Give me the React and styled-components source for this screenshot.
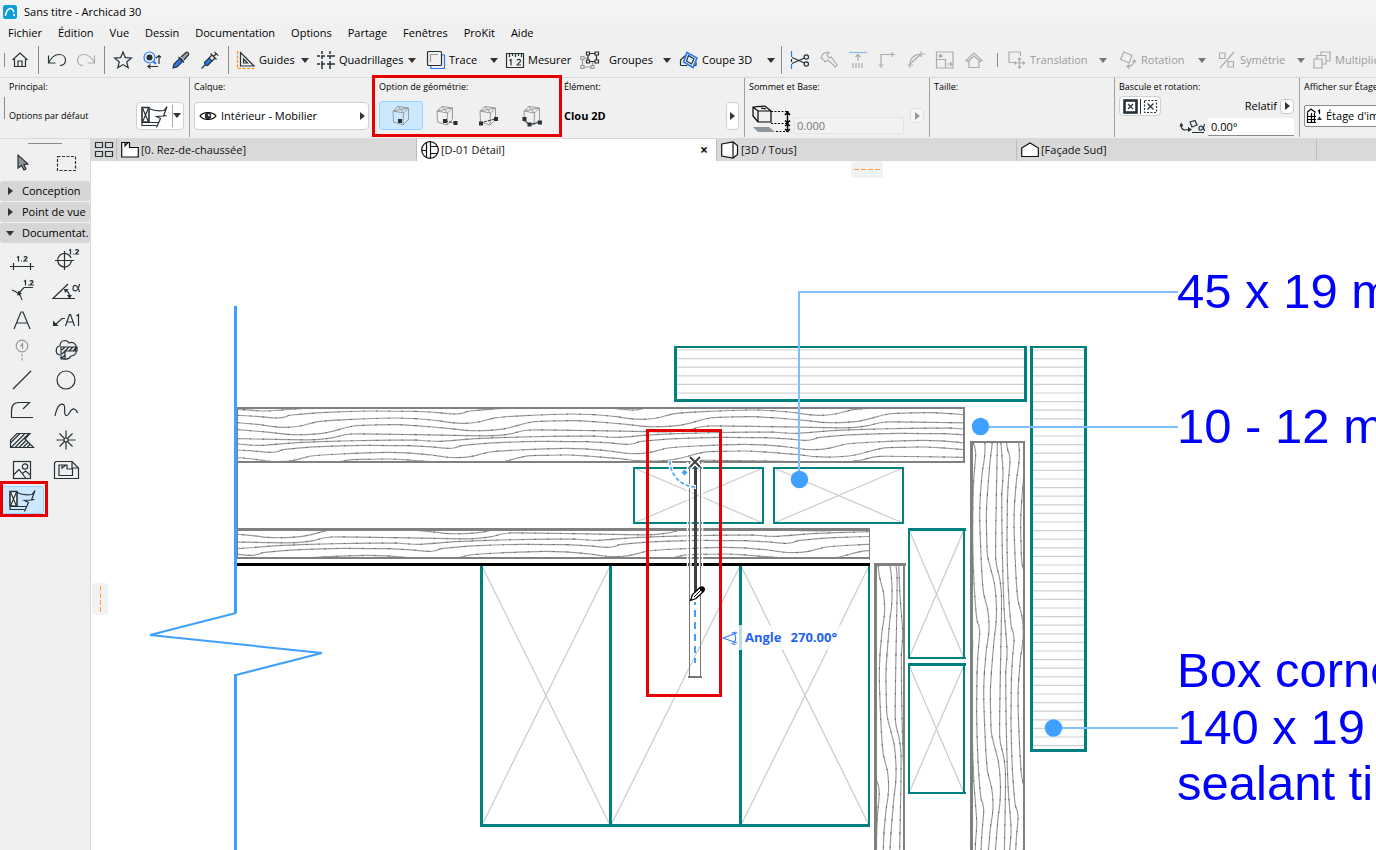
import React from 'react'
import styled, { createGlobalStyle } from 'styled-components'

const GlobalStyle = createGlobalStyle`
    * {
        box-sizing: border-box;
    }
    body {
        margin: 0;
        overflow: hidden;
        background: #f0f0f0;
        color: #000;
        font-family: "Open Sans", "Noto Sans", sans-serif;
        font-size: 11px;
        line-height: 16px;
    }
    button, input {
        font: inherit;
        color: inherit;
        border: none;
        background: none;
        padding: 0;
        margin: 0;
    }
    svg {
        display: block;
        flex: none;
    }
`

/* ---------- icons ---------- */

const icons = {
    logo: <>
        <rect x="0" y="0" width="18" height="18" rx="3" fill="#0a9fd4" stroke="none" />
        <path d="M3 14 C4 8 7 4 10 4.500 C12.500 5 13.500 7 14 9.500" stroke="#fff" strokeWidth="2" />
        <path d="M13 13h2.500" stroke="#fff" strokeWidth="2.500" />
    </>,
    home: <path d="M1.500 9 L9 2 L16.500 9 M3.500 8 V15.500 H14.500 V8 M7 15.500 V10 H11 V15.500" />,
    undo: <path d="M.5 4.500 V12 H7.500 M.5 12 C3 7 7 3.500 11 3.500 C15 3.500 17.500 6 17.500 9 C17.500 12.500 15 14.500 12 14.500" />,
    redo: <path d="M17.500 4.500 V12 H10.500 M17.500 12 C15 7 11 3.500 7 3.500 C3 3.500 .5 6 .5 9 C.5 12.500 3 14.500 6 14.500" />,
    star: <path d="M9 1 L11.300 6.600 L17.300 7 L12.700 11 L14.200 16.800 L9 13.600 L3.800 16.800 L5.300 11 L.7 7 L6.700 6.600 Z" />,
    find: <>
        <circle cx="6.500" cy="6.500" r="5.500" stroke="#2a78f0" />
        <circle cx="6.500" cy="6.500" r="3" fill="#263238" stroke="none" />
        <path d="M10.500 10.500 L13 13" stroke="#2a78f0" strokeWidth="2" />
        <path d="M16 13 V5 M13 7 L16 4.500 L18 6.500 M5 15.500 H15 M7.500 13.500 L5 15.500 L7.500 17.500" />
    </>,
    pipette: <>
        <path d="M1 17 L2 13 L8 7 L11 10 L5 16 Z" fill="#2a78f0" />
        <path d="M8 7 L11 10 M6.500 6 L12 11.500 M9 6 L14 1.500 C15.500 .5 17.500 2.500 16.500 4 L12 9" fill="#9aa3aa" />
    </>,
    syringe: <>
        <path d="M4 14 L3.500 11.500 L8 7 L11 10 L6.500 14.500 Z" fill="#2a78f0" />
        <path d="M.5 17.500 L4 14 M8 7 L11 4 L14 7 L11 10 M9.500 2.500 L15.500 8.500 M12.500 5.500 L15.500 2.500 M13.500 .8 L17.300 4.600" />
    </>,
    guides: <>
        <path d="M.5 0 V17.500 H18" stroke="#ff8a1c" strokeDasharray="3 1.500" />
        <path d="M3.500 1.500 V15 H17 Z M6.500 8 V12 H10.500 Z" />
    </>,
    grid: <path d="M5 0 V3 M5 5 V8 M5 10 V18 M13 0 V3 M13 5 V8 M13 10 V18 M0 5 H3 M4 5 H8 M10 5 H18 M0 13 H3 M4 13 H8 M10 13 H18" strokeWidth="1.500" />,
    trace: <>
        <path d="M15 4 H17.500 V17.500 H4 V15" stroke="#2a78f0" />
        <rect x=".5" y=".5" width="14" height="14" rx="1" />
        <path d="M3.500 11 V3.500 H11" stroke="#999" />
    </>,
    measure: <>
        <path d="M.5 16.500 V2.500 H17.500 V16.500 Z M3.500 3 V6 M6.500 3 V5 M9.500 3 V6 M12.500 3 V5 M15.500 3 V6" />
        <path d="M5 14.500 V8.500 L3.500 9.500 M11 9.500 C11 8 14.500 8 14.500 10 C14.500 11.500 11 13 11 14 H15" />
    </>,
    groups: <>
        <path d="M3 7 H7 M1.500 8.500 V14.500 M3 16 H10 M11.500 11 V14.500 M0 5.500 h3 v3 h-3z M0 14.500 h3 v3 h-3z M10 14.500 h3 v3 h-3z" stroke="#999" />
        <path d="M8.500 2.500 H14 M7 4 V9 M8.500 10.500 H14 M15.500 4 V9 M5.500 1 h3 v3 h-3z M14 1 h3.500 v3 h-3.500z M5.500 9 h3 v3 h-3z M14 9 h3.500 v3 h-3.500z" />
    </>,
    cut3d: <>
        <path d="M.5 14.500 V9 L6 4 M.5 14.500 H7 M16 11 V14.500 H13" />
        <path d="M7 1.500 L17 7 L13 16.500 L3.500 11 Z" fill="#e6f1ff" stroke="#2a78f0" strokeWidth="1.600" />
        <path d="M8.500 4.500 L14 8 L11.500 13 L6.500 10 Z" />
    </>,
    scissors: <>
        <path d="M.5 0 V6 M.5 13 V18" stroke="#2a78f0" />
        <path d="M1 6.500 L13.500 12 M1 12.500 L13.500 7 M.5 8 V11" />
        <circle cx="15.300" cy="6" r="2.200" /><circle cx="15.300" cy="13" r="2.200" />
    </>,
    axe: <path d="M1 7 C2 3 5 1 9 1.500 L7 4 L9 7 L11 6 L17 14 L15.500 16 L8 9 L5 11 L3.500 8.500 Z" />,
    align: <>
        <path d="M0 1.500 H18" stroke="#8ab8f0" />
        <path d="M9 3.500 V10 M6.500 6 L9 3.500 L11.500 6 M4 12 V17 M7 12 V17 M10 12 V17 M13 12 V17" />
    </>,
    corner: <path d="M3 17 V3.500 H17 M14 1 V6 M.5 14 H5.500" />,
    fillet: <path d="M3 17 V13 C3 7 8 3 15 3 M14 .5 V6 M.5 14 H6 M14 3 H18 M3 13 L13 4" />,
    resize: <path d="M.5 1 H17 V17 H.5 Z M.5 8.500 H9.500 V17 M4.500 7 V3.500 M2.500 5.500 L4.500 3.500 L6.500 5.500 M11 13 H16 M14 11 L16 13 L14 15" />,
    roof: <path d="M1 9.500 L9 2 L17 9.500 L15 10.500 L9 5 L3 10.500 Z M4 10 V16.500 H14 V10" />,
    move: <path d="M6 11.500 H1 V1 H12.500 V5 M11.500 7 V17 M6.500 12 H16.500 M10 8.500 L11.500 7 L13 8.500 M10 15.500 L11.500 17 L13 15.500 M15 10.500 L16.500 12 L15 13.500 M8 10.500 L6.500 12 L8 13.500" />,
    rotate: <path d="M5 1 L13 4.500 L10 12 L1.500 8.500 Z M8 15.500 C12 16 15 13 15.500 9 M13.500 11 L15.500 9 L17 11.500 M10.500 13.500 L8 15.500 L10.500 17.500" />,
    mirror: <path d="M1.500 2 H7 V7.500 H1.500 Z M16 1 L2 17 M10 10.500 H15.500 V16 H10 Z" />,
    copies: <path d="M1 8 H9 V17 H1 Z M4 8 V4.500 H13 V13 H9.500 M8 4.500 V1 H17 V10 H13.500" />,
    windows: <path d="M.5 1.500 H7.500 V6.500 H.5 Z M10.500 1.500 H17.500 V6.500 H10.500 Z M.5 10.500 H7.500 V15.500 H.5 Z M10.500 10.500 H17.500 V15.500 H10.500 Z" />,
    plan: <>
        <path d="M.7 1.500 H8.500 V6.500 H17.300 V16 H.7 Z" fill="#fff" />
        <path d="M4 2 V5 L7 1.500" />
    </>,
    detail: <>
        <circle cx="9" cy="9" r="8.300" />
        <path d="M5.500 1.500 V16.500 M9.500 1 V17 M1 9.500 H5.500 M9.500 5.500 H16 M9.500 12.500 H16" />
    </>,
    view3d: <>
        <path d="M.7 3 L12 1 L16.500 4.500 V13.500 L12 17 L.7 15 Z" fill="#fff" />
        <path d="M12 1 V17" />
    </>,
    facade: <path d="M.7 7 L9 2 L17.300 7 V15.500 H.7 Z" fill="#fff" />,
    eye: <>
        <path d="M1 9 C4 4.500 14 4.500 17 9 C14 13.500 4 13.500 1 9 Z" />
        <circle cx="9" cy="9" r="3.200" fill="#263238" stroke="none" /><circle cx="9.800" cy="8.200" r="1" fill="#fff" stroke="none" />
    </>,
    storey: <>
        <path d="M1 5.500 L5 2 L9.500 5.500 M1.500 6 V15.500 H10 M1.500 9.500 H10 M1.500 12.500 H10 M5.500 6 V15.500 M8.500 6 V15.500 M13.500 7 V3 L12 4" />
        <path d="M11 13 L16 13 L13.500 9.500 Z" fill="#263238" stroke="none" />
    </>,
    turn: <>
        <path d="M1 6 C1 11 5 12 9 10 M10 3 L15 1.500 L17 6 L12 8 Z M12 13.500 H24 M24.500 5 C23 13 18.500 12 19 9 C19.500 6 23 6 24.500 12" />
        <path d="M-.5 7.500 L1 3.500 L3.500 7 Z M8 8 L12 10.500 L8 13 Z" fill="#263238" stroke="none" />
    </>,
    flipA: <><rect x="1.500" y="1.500" width="12" height="12" strokeWidth="2.600" /><path d="M5 5 L10 10 M10 5 L5 10" /></>,
    flipB: <><rect x="1.500" y="1.500" width="12" height="12" strokeDasharray="2 1.500" /><path d="M4.500 4.500 L10.500 10.500 M10.500 4.500 L4.500 10.500" /></>,
    // palette
    arrow: <path d="M4 2 V15 L7.500 12.500 L10 17 L12 16 L10 11.500 L14 11 Z" fill="#8f969b" />,
    marquee: <rect x="3.500" y="5.500" width="18" height="14" strokeDasharray="3 1.500" />,
    dimension: <path d="M0 18.500 H24 M3.500 15 V22 M20.500 15 V22 M7 9.500 L8.500 8.500 V13.500 M11 13 h1 M14 9.500 C14.500 8 17.500 8.500 17 10 L14 13 H17.500" />,
    level: <path d="M1 12.500 H20 M10.500 3 V22 M17.300 13 A6.800 6.800 0 1 1 17 10 M15 2.500 L16.500 1.500 V6.500 M19 6 h.8 M21.500 2.500 C22 1 25 1.500 24.500 3 L21.500 6 H25" />,
    radial: <>
        <path d="M2 12 C8 14 11 17 12 22 M8 16 L14 9.500 H23 M14 3.500 L15.500 2.500 V7.500 M18 7 h.8 M20 3.500 C20.500 2 23.500 2.500 23 4 L20 7 H24" />
        <path d="M7 17.500 L8.500 12.500 L12 16 Z" fill="#263238" stroke="none" />
    </>,
    angle: <>
        <path d="M14 6 L-1 20.500 H21 M12 12 C14.500 14 15.500 16 15.500 19 M25.500 6 C24 15 18.500 14 19 10 C19.500 6 23.500 6 25.500 14" />
        <path d="M10 11 H14.500 L11 15 Z M13 17 H18 L15.500 21 Z" fill="#263238" stroke="none" />
    </>,
    text: <path d="M4 21 L11 4 H13 L20 21 M6.500 15 H17.500" />,
    label: <>
        <path d="M2 16 L8 10.500 H11 M11.500 18 L15.500 6.500 H16.500 L20.500 18 M13 14 H19 M22.500 8 L24.500 6.500 V18" />
        <path d="M-1 18 V12.500 L4.500 18 Z" fill="#263238" stroke="none" />
    </>,
    marker: <g stroke="#999">
        <circle cx="12" cy="8" r="5.800" /><path d="M12 16 V23" strokeDasharray="2.500 1.500" /><path d="M10.500 8.500 L12.500 5.500 V11" />
    </g>,
    change: <>
        <path d="M6 17 C0 16 2 8 6 8 C6 2 13 1 15 5 C20 3 24 8 21 11 C24 15 20 18 17 18 C15 22 9 22 7 19" />
        <path d="M7 9 H23 V13 H11 V21 H7 Z M8 12 l3-3 M8 16 l7-7 M8 20 l3-3 M15 13 l4-4 M19 13 l4-4" />
    </>,
    line: <path d="M3 21 L21 3" />,
    circle: <circle cx="12" cy="12" r="9" />,
    polyline: <path d="M23 19.500 H1.500 V13 C1.500 7 4 4.500 9 4.500 H19.500 L13 11" />,
    spline: <path d="M1 18 C3 8 7 4 10 7 C12 10 9 16 12 17.500 C15 19 16 10 20 11 C22 11.500 23 13 23.500 15" />,
    fill: <path d="M.5 19.500 V12 L7 5.500 H20 L15 11 L23.500 19.500 Z M.5 15 L10 5.500 M1 19.500 L14.500 6 M5 19.500 L18 6.500 M9 19.500 L16 12.500 M13 19.500 L18 14.500 M17 19.500 L20 16.500" />,
    hotspot: <>
        <circle cx="12" cy="12" r="2" />
        <path d="M12 2.500 V10 M12 14 V21.500 M2.500 12 H10 M14 12 H21.500 M5.500 5.500 L10.500 10.500 M13.500 13.500 L18.500 18.500 M18.500 5.500 L13.500 10.500 M10.500 13.500 L5.500 18.500" />
    </>,
    figure: <>
        <rect x="3.500" y="3.500" width="17" height="17" /><circle cx="15" cy="8.500" r="2.700" />
        <path d="M3.500 17 L9 11.500 L16 20.500 M12.500 15.500 L15.500 13 L20.500 17" />
    </>,
    drawing: <path d="M2 3.500 H18 L24.500 10 V20.500 H.5 V5 Z M18 3.500 V10 H24.500 M5 7 H13 V11 H18.500 V17.500 H5 Z M8 7 V10 L12 7" />,
    nail: <>
        <path d="M1 3.500 H8 V18 H1 Z" strokeWidth="1.600" fill="#fff" />
        <path d="M1.500 4 L7.500 18 M7.500 4 L1.500 18 M8 4.500 C13 7 17 7.500 23 6.500 L26 2.500 L22.500 12 L25.500 11.500 M23 12 L15.500 12.500 L19.500 14.500 L15.500 23.500 M1 18.500 H17 M1 18.500 V21.500 H15.500" />
    </>,
    box3d: <>
        <path d="M1 2 L13 1 L19 6 V17 H6 L1 11 Z M1 2 L6 6 H19 M6 6 V17 M9 3 L14 4" />
        <path d="M19 6.500 H37 M19 18.500 H37 M24 26.500 H37" strokeDasharray="2 1.500" />
        <path d="M35.500 8 V25 M33 10 L35.500 7 L38 10 M33 15.500 L35.500 18 L38 15.500 M33 21 L35.500 19 L38 21 M33 24 L35.500 26.500 L38 24" strokeWidth="1.500" />
        <path d="M1 22 H17 L23 27 H6 Z" fill="#8f969b" stroke="none" />
    </>,
}

const cube = <path d="M3 6 L8 1.500 L18.500 3 L13.500 8 Z M3 6 L3.500 17 L13 20 L13.500 8 M13 20 L18.500 14.500 V3 M3 6 L18.500 3 M8 1.500 L13.500 8" stroke="#9a9a9a" />
const geometry = [
    { title: 'Point', mark: <rect x="8" y="14" width="4" height="4" fill="#263238" stroke="none" /> },
    { title: 'Longueur', mark: <><path d="M11 16 L21 18" strokeDasharray="3 1" /><path d="M9 14h4v4h-4z M19.500 16h4v4h-4z" fill="#263238" stroke="none" /></> },
    { title: 'Diagonale', mark: <><path d="M3 18 L18 14" strokeDasharray="3 1" /><path d="M2 16.500h4v4h-4z M17 12h4v4h-4z" fill="#263238" stroke="none" /></> },
    { title: 'Rotation', mark: <><path d="M3 14 L8 19.500 L18 17.500" /><path d="M1.500 12h4v4h-4z M6.500 17.500h4v4h-4z M17 15.500h4v4h-4z" fill="#263238" stroke="none" /></> },
]

function Icon({ name, w = 18, h = 18, box }) {
    return (
        <svg width={w} height={h} viewBox={box || `0 0 ${w} ${h}`} fill="none" stroke="currentColor" strokeWidth="1.200" overflow="visible" aria-hidden="true">
            {icons[name]}
        </svg>
    )
}

/* ---------- data ---------- */

const menus = ['Fichier', 'Édition', 'Vue', 'Dessin', 'Documentation', 'Options', 'Partage', 'Fenêtres', 'ProKit', 'Aide']

const viewTools = [
    { icon: 'guides', label: 'Guides', w: 80, ml: 3, caret: true },
    { icon: 'grid', label: 'Quadrillages', w: 107, caret: true },
    { icon: 'trace', label: 'Trace', w: 79, ml: 3, caret: true },
    { icon: 'measure', label: 'Mesurer', w: 75 },
    { icon: 'groups', label: 'Groupes', w: 96, gap: 10, caret: true },
    { icon: 'cut3d', label: 'Coupe 3D', w: 103, ml: 3, caret: true },
]

const editTools = [
    { icon: 'move', label: 'Translation', w: 107, ml: 8, caret: true },
    { icon: 'rotate', label: 'Rotation', w: 95, ml: 4, caret: true },
    { icon: 'mirror', label: 'Symétrie', w: 95, ml: 4, caret: true },
    { icon: 'copies', label: 'Multiplier', w: 90, caret: true },
]

const palette = [
    ['dimension', 'Cote'], ['level', 'Cote de niveau'],
    ['radial', 'Cote radiale'], ['angle', "Cote d'angle"],
    ['text', 'Texte'], ['label', 'Étiquette'],
    ['marker', 'Axe'], ['change', 'Modification'],
    ['line', 'Ligne'], ['circle', 'Cercle'],
    ['polyline', 'Polyligne'], ['spline', 'Spline'],
    ['fill', 'Hachure'], ['hotspot', 'Point chaud'],
    ['figure', 'Image'], ['drawing', 'Dessin'],
    ['nail', 'Clou 2D'],
]

const tabs = [
    { icon: 'plan', label: '[0. Rez-de-chaussée]' },
    { icon: 'detail', label: '[D-01 Détail]', active: true },
    { icon: 'view3d', label: '[3D / Tous]' },
    { icon: 'facade', label: '[Façade Sud]' },
]

/* ---------- wood grain ---------- */

// one tile of the grain, in thirds of a pixel
const grain = [
    [[22, 46], [80, 49], [140, 54], [165, 51], [185, 45], [290, 37], [420, 33], [557, 34]],
    [[22, 68], [90, 74], [130, 80], [165, 82], [210, 78], [265, 65], [350, 59], [490, 54], [557, 56]],
    [[22, 89], [120, 97], [170, 103], [225, 104], [290, 98], [370, 78], [430, 75], [500, 74], [557, 77]],
    [[22, 116], [180, 119], [260, 119], [310, 113], [365, 102], [557, 104]],
    [[22, 132], [90, 136], [200, 128], [300, 124], [430, 121], [557, 120]],
]

// smooth path through the points
function smooth(pts) {
    let d = `M${pts[0][0]} ${pts[0][1]}`
    for (let i = 0; i < pts.length - 1; i++) {
        const a = pts[i]
        const b = pts[i + 1]
        const p = pts[i - 1] || a
        const n = pts[i + 2] || b
        const s = 8
        d += `C${a[0] + (b[0] - p[0]) / s} ${a[1] + (b[1] - p[1]) / s} ${b[0] - (n[0] - a[0]) / s} ${b[1] - (n[1] - a[1]) / s} ${b[0]} ${b[1]}`
    }
    return d
}

const grainPath = (() => {
    let d = ''
    for (let j = -3; j < 8; j++) {
        for (let i = -2; i < 6; i++) {
            grain.forEach((line) => {
                d += smooth(line.map(([x, y]) => [x + i * 535 - j * 20, y - i * 12 + j * 103]))
            })
        }
    }
    return d
})()

const Grain = () => (
    <>
        <path d={grainPath} stroke="#989898" strokeWidth="3.500" />
        <path d={grainPath} stroke="#5c5c5c" strokeWidth="3" strokeDasharray="4 34" />
    </>
)

const hatch = (x1, x2, y1, y2) => {
    let d = ''
    for (let y = y1; y < y2; y += 8.6) d += `M${x1} ${y.toFixed(1)}H${x2}`
    return <path d={d} stroke="#cfcfcf" strokeWidth="1.200" />
}

const cross = (x1, y1, x2, y2) => `M${x1} ${y1}L${x2} ${y2}M${x2} ${y1}L${x1} ${y2}`

function DetailDrawing() {
    return (
        <Drawing aria-label="Détail">
            <defs>
                <clipPath id="beamTop"><rect x="237" y="408" width="727" height="54" /></clipPath>
                <clipPath id="beamLow"><rect x="237" y="530" width="632" height="28" /></clipPath>
                <clipPath id="postRight"><rect x="973" y="443" width="50" height="900" /></clipPath>
                <clipPath id="postLeft"><rect x="877" y="566" width="26" height="900" /></clipPath>
            </defs>
            <g transform="translate(-91 -161)" fill="none">
                <g clipPath="url(#beamTop)"><g transform="translate(230 400) scale(.33333)"><Grain /></g></g>
                <g clipPath="url(#beamLow)"><g transform="translate(230 400) scale(.33333)"><Grain /></g></g>
                <g clipPath="url(#postRight)"><g transform="translate(965.700 858.300) rotate(-90) scale(.33333)"><Grain /></g></g>
                <g clipPath="url(#postLeft)"><g transform="translate(861.300 840.300) rotate(-90) scale(.33333)"><Grain /></g></g>

                <path d={
                    cross(634, 468, 763, 523) + cross(774, 468, 903, 523) + cross(909, 530, 964, 658) +
                    cross(909, 665, 964, 793) + cross(482, 566, 610, 825) + 'M740 566L611 825' + cross(741, 566, 869, 825)
                } stroke="#cdcdcd" strokeWidth="1.300" />
                {hatch(677, 1024, 350, 399)}
                {hatch(1033, 1084, 350, 748)}

                <g stroke="#808080" strokeWidth="2">
                    <path d="M237 408H965M237 462H965M964 408V462M237 558H870M971 442H1025M1024 441V1700M904 564V1700" />
                    <path d="M237.500 408V558M869.500 528V560" strokeWidth="1" />
                    <path d="M237 529.500H870M971.500 441V1700M875.500 563V1700M874 564.500H906" strokeWidth="3" />
                </g>
                <g stroke="#008080" strokeWidth="2">
                    <path d="M674 347H1027M1030 347H1087M634 467V524M763 467V524M633 468H764M633 523H764M774 467V524M903 467V524M773 468H904M773 523H904M909 530V659M964 530V659M908 658H966M909 664V794M964 664V794M908 793H966M869 566V826" />
                    <path d="M675.500 346V402M1025.500 346V402M674 400.500H1027M1031.500 346V752M1085.500 346V752M1030 750.500H1087M908 529.500H966M908 664.500H966M481.500 566V827M610.500 566V827M740.500 566V827M480 825.500H870" strokeWidth="3" />
                </g>
                <path d="M237 564.500H870" stroke="#000" strokeWidth="3" />

                <path d="M235.500 306V613M235.500 674V1700" stroke="#40a0ff" strokeWidth="3" />
                <path d="M236 613L150 635L322 653L236 675" stroke="#40a0ff" strokeWidth="2" />

                <path d="M1178 292H799V479M980 427H1178M1053 728H1178" stroke="#80bfff" strokeWidth="2" />
                <g fill="#40a0ff">
                    <circle cx="799.500" cy="479.500" r="8.700" />
                    <circle cx="980.500" cy="426.500" r="8.700" />
                    <circle cx="1053.500" cy="728" r="8.700" />
                </g>

                {/* nail */}
                <path d="M687.500 462V600M691 462V600M699.500 462V600M702.500 462V600" stroke="#fff" strokeWidth="1.500" />
                <path d="M689.500 462V677M700.500 462V677" stroke="#777" />
                <path d="M688 677H702" stroke="#777" strokeWidth="2" />
                <path d="M695.500 464V592" stroke="#404040" strokeWidth="3" />
                <path d="M695 602V663" stroke="#40a0ff" strokeWidth="2" strokeDasharray="7 5" strokeDashoffset="4" />
                <path d="M670 461A26 26 0 0 0 696 487" stroke="#fff" strokeWidth="4" />
                <path d="M670 461A26 26 0 0 0 696 487" stroke="#40a0ff" strokeWidth="1.600" strokeDasharray="4 2" />
                <path d="M684.500 469.500L687.500 472.500L684.500 475.500L681.500 472.500Z" fill="#40a0ff" />
                <path d="M690 457L700 467M700 457L690 467" stroke="#fff" strokeWidth="5" />
                <path d="M690 457L700 467M700 457L690 467" stroke="#404040" strokeWidth="2" />
                <path d="M690.500 600.500L692.500 594.500L700 587.500L703.500 591.500L696 598.500Z" fill="#fff" stroke="#000" strokeWidth="1.300" />
                <path d="M694 597L701 590" stroke="#000" />
                <path d="M699.500 588.500C701 586 704 586.500 704.500 588.500C705 591 703 592 702.500 592Z" fill="#000" stroke="#000" />

                <Note>
                    <text x="1177" y="308">45 x 19 mm</text>
                    <text x="1177" y="443">10 - 12 mm</text>
                    <text x="1177" y="687">Box corner</text>
                    <text x="1177" y="744">140 x 19 mm</text>
                    <text x="1177" y="800">sealant ti</text>
                </Note>
            </g>
        </Drawing>
    )
}

function Tool({ icon, label, w, ml, gap, caret, dim }) {
    return (
        <ToolButton $w={w} $ml={ml} $gap={gap} $dim={dim}>
            <Icon name={icon} />
            <span>{label}</span>
            {caret && <Caret $dim={dim} />}
        </ToolButton>
    )
}

export default function App() {
    return (
        <Page>
            <GlobalStyle />
            <TitleBar>
                <Icon name="logo" w={14} h={14} box="0 0 18 18" />
                Sans titre - Archicad 30
            </TitleBar>
            <MenuBar>
                {menus.map((m) => <MenuItem key={m}>{m}</MenuItem>)}
            </MenuBar>

            <Toolbar>
                <Grip />
                <IconButton aria-label="Accueil"><Icon name="home" /></IconButton>
                <Separator />
                <IconButton aria-label="Annuler"><Icon name="undo" /></IconButton>
                <IconButton aria-label="Rétablir" $dim><Icon name="redo" /></IconButton>
                <Separator />
                <IconButton aria-label="Favoris"><Icon name="star" /></IconButton>
                <IconButton aria-label="Rechercher"><Icon name="find" /></IconButton>
                <IconButton aria-label="Prélever"><Icon name="pipette" /></IconButton>
                <IconButton aria-label="Injecter"><Icon name="syringe" /></IconButton>
                <Separator />
                {viewTools.map((t) => <Tool key={t.icon} {...t} />)}
                <Separator $flush />
                <IconButton aria-label="Couper"><Icon name="scissors" /></IconButton>
                {['axe', 'align', 'corner', 'fillet', 'resize', 'roof'].map((n) => (
                    <IconButton key={n} aria-label={n} $dim><Icon name={n} /></IconButton>
                ))}
                <Grip $ml={9} />
                {editTools.map((t) => <Tool key={t.icon} dim {...t} />)}
            </Toolbar>

            <InfoBox>
                <Panel $first>
                    <PanelLabel>Principal:</PanelLabel>
                    <PanelRow>
                        <RowGrip />
                        <Small>Options par défaut</Small>
                        <DefaultButton aria-label="Options par défaut">
                            <Icon name="nail" w={27} h={24} />
                            <i />
                            <Caret />
                        </DefaultButton>
                    </PanelRow>
                </Panel>
                <Panel $open>
                    <PanelLabel>Calque:</PanelLabel>
                    <PanelRow>
                        <LayerButton>
                            <Icon name="eye" />
                            Intérieur - Mobilier
                            <RightCaret />
                        </LayerButton>
                    </PanelRow>
                </Panel>
                <Panel $open>
                    <PanelLabel>Option de géométrie:</PanelLabel>
                    <PanelRow>
                        {geometry.map((g, i) => (
                            <GeometryButton key={g.title} aria-label={g.title} $on={i === 0}>
                                <svg width="22" height="22" viewBox="0 0 22 22" fill="none" stroke="#263238" overflow="visible">{cube}{g.mark}</svg>
                            </GeometryButton>
                        ))}
                    </PanelRow>
                    <PanelHighlight />
                </Panel>
                <Panel>
                    <PanelLabel>Élément:</PanelLabel>
                    <PanelRow>
                        <strong>Clou 2D</strong>
                        <NarrowButton aria-label="Choisir un élément"><RightCaret /></NarrowButton>
                    </PanelRow>
                </Panel>
                <Panel>
                    <PanelLabel as="label" htmlFor="base">Sommet et Base:</PanelLabel>
                    <HeightRow>
                        <Icon name="box3d" w={38} h={28} />
                        <HeightInput id="base" defaultValue="0.000" disabled />
                        <MiniButton aria-label="Niveau de référence" $dim><RightCaret $dim /></MiniButton>
                    </HeightRow>
                </Panel>
                <Panel>
                    <PanelLabel>Taille:</PanelLabel>
                </Panel>
                <Panel>
                    <PanelLabel as="label" htmlFor="angle">Bascule et rotation:</PanelLabel>
                    <FlipRow>
                        <FlipGroup>
                            <button aria-label="Normal"><Icon name="flipA" w={15} h={15} /></button>
                            <i />
                            <button aria-label="Basculé"><Icon name="flipB" w={15} h={15} /></button>
                        </FlipGroup>
                        <Relative>Relatif</Relative>
                        <MiniButton aria-label="Relatif"><RightCaret /></MiniButton>
                    </FlipRow>
                    <AngleRow>
                        <Icon name="turn" w={25} h={15} />
                        <AngleInput id="angle" defaultValue="0.00°" />
                    </AngleRow>
                </Panel>
                <Panel>
                    <PanelLabel>Afficher sur Étages:</PanelLabel>
                    <PanelRow>
                        <StoreyButton><Icon name="storey" />Étage d'implantation</StoreyButton>
                    </PanelRow>
                </Panel>
            </InfoBox>

            <Workspace>
                <Toolbox>
                    <ToolboxGrip />
                    <SelectRow>
                        <PaletteButton aria-label="Flèche"><Icon name="arrow" w={18} h={18} box="-1 1 18 18" /></PaletteButton>
                        <PaletteButton aria-label="Rectangle de sélection"><Icon name="marquee" w={24} h={24} /></PaletteButton>
                    </SelectRow>
                    <Section><RightCaret />Conception</Section>
                    <Section><RightCaret />Point de vue</Section>
                    <Section $open><Caret />Documentat.</Section>
                    <PaletteGrid>
                        {palette.map(([icon, name]) => (
                            <PaletteButton key={icon} aria-label={name} $on={icon === 'nail'}>
                                <Icon name={icon} w={icon === 'nail' ? 28 : 24} h={24} />
                                {icon === 'nail' && <ToolHighlight />}
                            </PaletteButton>
                        ))}
                    </PaletteGrid>
                </Toolbox>

                <Main>
                    <TabBar>
                        <OverviewButton aria-label="Vue d'ensemble des onglets"><Icon name="windows" /></OverviewButton>
                        {tabs.map((t) => (
                            <Tab key={t.icon} $active={t.active}>
                                <Icon name={t.icon} />
                                {t.label}
                                {t.active && <Close aria-label="Fermer">×</Close>}
                            </Tab>
                        ))}
                    </TabBar>
                    <Canvas>
                        <DetailDrawing />
                        <TopHandle />
                        <SideHandle />
                        <NailHighlight />
                        <Tracker>
                            <svg width="16" height="14" viewBox="0 0 16 14" fill="none" stroke="#3f7bf5" strokeWidth="1.200">
                                <path d="M15 2L1 7L15 12M12 2C14 5 14 9 12 12M9.500 2L14.500 1M9.500 12L13.500 14" />
                            </svg>
                            <TrackerText><span>Angle</span><span>270.00°</span></TrackerText>
                        </Tracker>
                    </Canvas>
                </Main>
            </Workspace>
        </Page>
    )
}

/* ---------- frame ---------- */

const Page = styled.div`
    display: flex;
    flex-direction: column;
    height: 100vh;
    overflow: hidden;
`

const TitleBar = styled.header`
    display: flex;
    flex: none;
    align-items: center;
    gap: 7px;
    height: 23px;
    padding-left: 3px;
    background: #f3f3f3;
`

const MenuBar = styled.nav`
    display: flex;
    flex: none;
    height: 20px;
`

const MenuItem = styled.button`
    padding: 0 8px;
`

const Toolbar = styled.div`
    display: flex;
    flex: none;
    align-items: center;
    height: 35px;
    border-bottom: 1px solid #dadada;
    overflow: hidden;
    color: #263238;
`

const Grip = styled.div`
    flex: none;
    width: 1px;
    height: 14px;
    margin-left: ${(props) => props.$ml || 4}px;
    background: #8a8a8a;
`

const Separator = styled(Grip)`
    height: 28px;
    margin: 0 3px 0 ${(props) => (props.$flush ? 0 : 4)}px;
`

const IconButton = styled.button`
    display: flex;
    flex: none;
    justify-content: center;
    width: 29px;
    color: ${(props) => (props.$dim ? '#a9adb0' : '#263238')};
`

const ToolButton = styled.button`
    display: flex;
    flex: none;
    align-items: center;
    gap: ${(props) => props.$gap || 4}px;
    width: ${(props) => props.$w}px;
    margin-left: ${(props) => props.$ml || 0}px;
    padding: 0 6px 0 2px;
    color: ${(props) => (props.$dim ? '#a9adb0' : '#263238')};

    span {
        color: ${(props) => (props.$dim ? '#9b9b9b' : '#000')};
    }
`

const Caret = styled.i`
    flex: none;
    margin-left: auto;
    border: 4px solid transparent;
    border-top: 5px solid ${(props) => (props.$dim ? '#777' : '#333')};
    border-bottom: 0;
`

const RightCaret = styled.i`
    flex: none;
    border: 4px solid transparent;
    border-left: 5px solid ${(props) => (props.$dim ? '#999' : '#333')};
    border-right: 0;
`

/* ---------- info box ---------- */

const InfoBox = styled.div`
    display: flex;
    flex: none;
    height: 61px;
    border-bottom: 1px solid #dadada;
`

const Panel = styled.section`
    position: relative;
    display: flex;
    flex: none;
    flex-direction: column;
    width: ${(props) => (props.$first ? 190 : 185)}px;
    height: 59px;
    padding: 2px 5px 0 ${(props) => (props.$first ? 9 : 4)}px;
    border-right: 1px solid ${(props) => (props.$open ? 'transparent' : '#a0a0a0')};
`

const PanelLabel = styled.span`
    flex: none;
    font-size: 9px;
    line-height: 14px;
    white-space: nowrap;
`

const Small = styled.span`
    font-size: 9px;
`

const PanelRow = styled.div`
    display: flex;
    align-items: center;
    height: 44px;
`

const RowGrip = styled.i`
    width: 1px;
    height: 22px;
    margin: 0 4px 16px -5px;
    background: #8a8a8a;
`

const PopupButton = styled.button`
    display: flex;
    align-items: center;
    background: #fff;
    border: 1px solid #d0d0d0;
    border-radius: 4px;
    white-space: nowrap;
`

const DefaultButton = styled(PopupButton)`
    width: 48px;
    height: 28px;
    margin-left: auto;
    padding: 0 2px 0 4px;
    color: #263238;

    > i:first-of-type {
        width: 1px;
        height: 22px;
        margin-left: 4px;
        background: #aaa;
    }
`

const LayerButton = styled(PopupButton)`
    width: 175px;
    height: 28px;
    padding: 0 3px 0 4px;
    gap: 4px;

    i {
        margin-left: auto;
    }
`

const NarrowButton = styled(PopupButton)`
    justify-content: center;
    width: 13px;
    height: 28px;
    margin-left: auto;
`

const MiniButton = styled(PopupButton)`
    justify-content: center;
    width: 14px;
    height: 15px;
    border-color: ${(props) => (props.$dim ? '#e2e2e2' : '#c8c8c8')};
    background: ${(props) => (props.$dim ? '#f6f6f6' : '#fff')};
`

const GeometryButton = styled.button`
    display: flex;
    align-items: center;
    justify-content: center;
    width: 44px;
    height: 29px;
    border: 1px solid ${(props) => (props.$on ? '#99d1ff' : 'transparent')};
    border-radius: 3px;
    background: ${(props) => (props.$on ? '#cce8ff' : 'none')};
`

const highlight = `
    position: absolute;
    border: 3px solid #e60000;
    pointer-events: none;
    z-index: 2;
`

const PanelHighlight = styled.div`
    ${highlight}
    inset: -3px -3px 0 -3px;
`

const HeightRow = styled.div`
    display: flex;
    align-items: center;
    height: 44px;
    padding-left: 3px;

    > svg {
        margin-top: 6px;
    }
`

const HeightInput = styled.input`
    width: 110px;
    height: 17px;
    margin: 20px 6px 0 4px;
    padding: 0 2px;
    border: 1px solid #e4e4e4;
    background: #f2f2f2;
    color: #777;
`

const FlipRow = styled.div`
    display: flex;
    align-items: center;
    gap: 3px;
    height: 20px;
    margin-top: 2px;
`

const FlipGroup = styled(PopupButton).attrs({ as: 'div' })`
    justify-content: center;
    gap: 2px;
    width: 42px;
    height: 20px;
    color: #263238;

    > i {
        width: 1px;
        height: 15px;
        background: #263238;
    }
`

const Relative = styled.span`
    margin-left: auto;
`

const AngleRow = styled.div`
    display: flex;
    align-items: center;
    justify-content: flex-end;
    gap: 3px;
    height: 21px;
    color: #263238;
`

const AngleInput = styled.input`
    width: 86px;
    height: 18px;
    padding: 0 3px;
    background: #fff;
    border-bottom: 1px solid #8a8a8a;
    color: #000;
`

const StoreyButton = styled(PopupButton)`
    width: 175px;
    height: 22px;
    padding-left: 1px;
    gap: 2px;
    border-color: #8a8a8a;
    border-radius: 2px;
`

/* ---------- workspace ---------- */

const Workspace = styled.div`
    display: flex;
    flex: 1;
    min-height: 0;
`

const Toolbox = styled.aside`
    flex: none;
    width: 91px;
    border-right: 1px solid #d9d9d9;
    color: #263238;
`

const ToolboxGrip = styled.div`
    width: 34px;
    height: 1px;
    margin: 4px 0 4px 28px;
    background: #8a8a8a;
`

const PaletteGrid = styled.div`
    display: grid;
    grid-template-columns: 44px 44px;
    grid-auto-rows: 30px;
    padding-top: 1px;
`

const SelectRow = styled(PaletteGrid)`
    padding: 0 0 3px;
`

const PaletteButton = styled.button`
    position: relative;
    display: flex;
    align-items: center;
    justify-content: center;
    ${(props) => props.$on && `
        margin: 1px 0 1px 2px;
        border: 1px solid #99d1ff;
        border-radius: 3px;
        background: #cce8ff;
    `}
`

const ToolHighlight = styled.div`
    ${highlight}
    inset: -6px -5px -4px -3px;
`

const Section = styled.button`
    display: flex;
    align-items: center;
    gap: ${(props) => (props.$open ? 8 : 9)}px;
    width: 90px;
    height: 20px;
    margin-bottom: 1px;
    padding-left: ${(props) => (props.$open ? 6 : 8)}px;
    border-radius: 3px;
    background: #d6d6d6;
    color: #000;
    white-space: nowrap;

    i {
        margin-left: 0;
    }
`

const Main = styled.main`
    display: flex;
    flex: 1;
    flex-direction: column;
    min-width: 0;
`

const TabBar = styled.div`
    display: flex;
    flex: none;
    height: 22px;
    background: #d9d9d9;
    overflow: hidden;
    color: #263238;
`

const OverviewButton = styled.button`
    display: flex;
    flex: none;
    align-items: center;
    justify-content: center;
    width: 26px;
    border-right: 1px solid #bdbdbd;
`

const Tab = styled.div`
    display: flex;
    flex: none;
    align-items: center;
    gap: 2px;
    width: 300px;
    padding: 0 4px;
    border-right: 1px solid #bdbdbd;
    background: ${(props) => (props.$active ? '#fff' : 'none')};
    color: #111;
`

const Close = styled.button`
    margin-left: auto;
    padding: 0 4px;
    font-size: 14px;
    font-weight: 700;
`

const Canvas = styled.div`
    position: relative;
    flex: 1;
    overflow: hidden;
    background: #fff;
`

const Drawing = styled.svg`
    width: 100%;
    height: 100%;
`

const Note = styled.g`
    fill: #00f;
    font-family: "Liberation Sans", Arial, sans-serif;
    font-size: 49px;
`

const Handle = styled.div`
    position: absolute;
    display: flex;
    align-items: center;
    justify-content: center;
    background: #f2f2f2;
    border-radius: 3px;

    &::after {
        content: "";
    }
`

const TopHandle = styled(Handle)`
    left: 760px;
    top: 0;
    width: 32px;
    height: 17px;

    &::after {
        width: 26px;
        height: 1px;
        background: linear-gradient(to right, #ff9d45 5px, transparent 5px) 0 0 / 7px 1px;
    }
`

const SideHandle = styled(Handle)`
    left: 1px;
    top: 422px;
    width: 16px;
    height: 32px;

    &::after {
        width: 1px;
        height: 26px;
        background: linear-gradient(to bottom, #ff9d45 5px, transparent 5px) 0 0 / 1px 7px;
    }
`

const NailHighlight = styled.div`
    ${highlight}
    left: 555px;
    top: 268px;
    width: 76px;
    height: 268px;
`

const Tracker = styled.div`
    position: absolute;
    left: 631px;
    top: 464px;
    display: flex;
    align-items: center;
    gap: 1px;
    height: 25px;
`

const TrackerText = styled.div`
    display: flex;
    gap: 9px;
    padding: 4px 6px;
    background: rgba(255, 255, 255, .75);
    color: #1f63f0;
    font-size: 13px;
    font-weight: 700;
    line-height: 17px;
`
